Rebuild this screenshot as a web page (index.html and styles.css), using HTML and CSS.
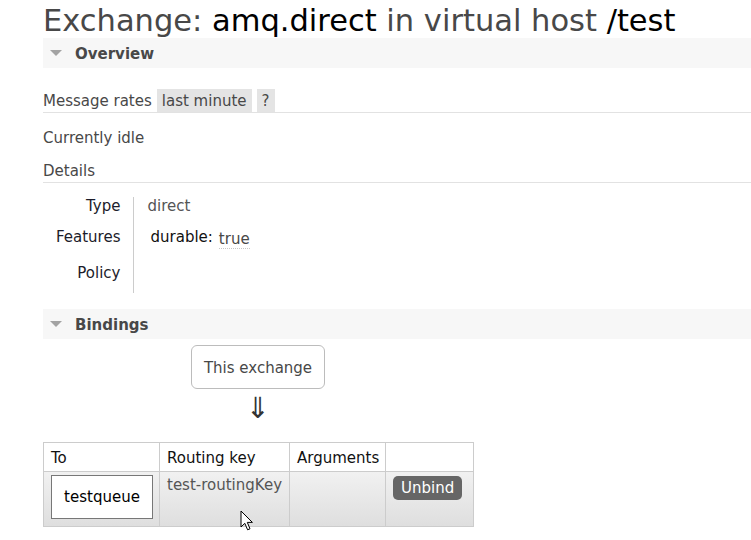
FILE: index.html
```html
<!DOCTYPE html>
<html>
<head>
<meta charset="utf-8">
<link rel="stylesheet" href="styles.css">
</head>
<body>
<div class="page">
  <h1 class="title">Exchange: <b>amq.direct</b> in virtual host <b>/test</b></h1>

  <h2 class="section-bar"><span class="tri"></span>Overview</h2>

  <div class="rates-row">
    <span class="rates-label">Message rates</span>
    <span class="pill">last minute</span>
    <span class="pill pill-q">?</span>
  </div>

  <p class="idle">Currently idle</p>

  <div class="details-head">Details</div>

  <table class="facts">
    <tr class="r1"><th>Type</th><td class="val">direct</td></tr>
    <tr class="r2"><th>Features</th><td><span class="feat-key">durable:</span><abbr class="feat-val">true</abbr></td></tr>
    <tr class="r3"><th>Policy</th><td></td></tr>
  </table>

  <h2 class="section-bar bindings-bar"><span class="tri"></span>Bindings</h2>

  <div class="flow">
    <div class="this-ex">This exchange</div>
    <div class="arrow">⇓</div>
  </div>

  <table class="bindings">
    <colgroup>
      <col class="c1"><col class="c2"><col class="c3"><col class="c4">
    </colgroup>
    <tr class="hrow">
      <th>To</th>
      <th>Routing key</th>
      <th>Arguments</th>
      <th></th>
    </tr>
    <tr class="brow">
      <td><div class="queue-box">testqueue</div></td>
      <td class="rk">test-routingKey</td>
      <td></td>
      <td><span class="unbind">Unbind</span></td>
    </tr>
  </table>

  <svg class="cursor" width="14" height="22" viewBox="0 0 14 22">
    <path d="M1 1 L1 17 L4.8 13.3 L7.6 19.8 L10 18.8 L7.3 12.4 L12.4 12.4 Z" fill="#fff" stroke="#000" stroke-width="1" stroke-linejoin="miter"/>
  </svg>
</div>
</body>
</html>
```

FILE: styles.css
```css
html, body {
  margin: 0;
  padding: 0;
  background: #fff;
}

body {
  font-family: "DejaVu Sans", Verdana, sans-serif;
  font-size: 15px;
  color: #484848;
  overflow: hidden;
  width: 751px;
  height: 540px;
}

.page {
  position: relative;
  padding: 4px 0 0 43px;
}

.title {
  margin: 0;
  font-size: 30.5px;
  font-weight: normal;
  line-height: 34px;
  color: #484848;
  white-space: nowrap;
}

.title b {
  font-weight: normal;
  color: #000;
}

.section-bar {
  margin: 0;
  height: 30px;
  box-sizing: border-box;
  padding-top: 2px;
  line-height: 28px;
  background: #f7f7f7;
  font-size: 15px;
  font-weight: bold;
  color: #484848;
  padding-left: 32px;
  position: relative;
}

.tri {
  position: absolute;
  left: 7px;
  top: 12px;
  width: 0;
  height: 0;
  border-left: 6px solid transparent;
  border-right: 6px solid transparent;
  border-top: 6px solid #a3a3a3;
}

.rates-row {
  margin-top: 21px;
  height: 23px;
  line-height: 21px;
  border-bottom: 1px solid #e2e2e2;
  display: flex;
  align-items: stretch;
  gap: 5px;
}

.rates-label {
  padding-top: 2px;
}

.pill {
  background: #e4e4e4;
  padding: 2px 5px 0;
  color: #484848;
}

.idle {
  margin: 16px 0 0;
  line-height: 18px;
}

.details-head {
  margin-top: 15px;
  line-height: 18px;
  padding-bottom: 2px;
  border-bottom: 1px solid #e2e2e2;
}

.facts {
  margin-top: 14px;
  border-collapse: collapse;
}

.facts th {
  width: 90px;
  box-sizing: border-box;
  text-align: right;
  font-weight: normal;
  color: #1c1c2a;
  padding: 0 12px 0 0;
  border-right: 1px solid #cccccc;
  vertical-align: top;
  line-height: 16px;
}

.facts td {
  vertical-align: top;
  line-height: 16px;
  padding: 0 0 0 14px;
}

.facts .r1 th, .facts .r1 td {
  height: 28px;
  padding-top: 1px;
  box-sizing: border-box;
}

.facts .r2 th, .facts .r2 td {
  height: 36px;
  padding-top: 4px;
  box-sizing: border-box;
}

.facts .r3 th, .facts .r3 td {
  height: 32px;
  padding-top: 4px;
  box-sizing: border-box;
}

.val {
  color: #555;
}

.feat-key {
  color: #111;
  padding-left: 3px;
  margin-right: 6px;
}

.feat-val {
  color: #484848;
  text-decoration: none;
  border-bottom: 1px dotted #c8c8c8;
  position: relative;
  top: 2px;
}

.bindings-bar {
  margin-top: 16px;
}

.flow {
  margin-left: 148px;
  width: 134px;
  display: flex;
  flex-direction: column;
  align-items: center;
}

.this-ex {
  margin-top: 6px;
  width: 134px;
  height: 44px;
  box-sizing: border-box;
  padding-top: 2px;
  border: 1px solid #bcbcbc;
  border-radius: 6px;
  display: flex;
  align-items: center;
  justify-content: center;
  color: #484848;
}

.arrow {
  margin-top: 4px;
  height: 30px;
  line-height: 30px;
  font-size: 29px;
  color: #333;
}

.bindings {
  margin-top: 19px;
  border-collapse: collapse;
  border: 1px solid #cccccc;
  table-layout: fixed;
  width: 430px;
}

.c1 { width: 116px; }
.c2 { width: 130px; }
.c3 { width: 96px; }
.c4 { width: 88px; }

.bindings th, .bindings td {
  border: 1px solid #cccccc;
  box-sizing: border-box;
  overflow: visible;
  white-space: nowrap;
}

.bindings th {
  font-weight: normal;
  color: #111;
  text-align: left;
  padding: 1px 7px 0;
  height: 29px;
  line-height: 18px;
  vertical-align: middle;
}

.brow {
  background: linear-gradient(#f1f1f1, #dedede);
}

.brow td {
  height: 55px;
  vertical-align: top;
  padding: 3px 6px 0 7px;
  line-height: 20px;
}

.queue-box {
  width: 102px;
  height: 44px;
  box-sizing: border-box;
  border: 1px solid #777;
  background: #fff;
  color: #000;
  display: flex;
  align-items: center;
  justify-content: center;
}

.rk {
  color: #555;
}

.unbind {
  display: inline-block;
  background: #666;
  color: #fff;
  border-radius: 5px;
  padding: 0 8px;
  height: 24px;
  line-height: 24px;
  margin-top: 1px;
}

.cursor {
  position: absolute;
  left: 240px;
  top: 510px;
}
```
